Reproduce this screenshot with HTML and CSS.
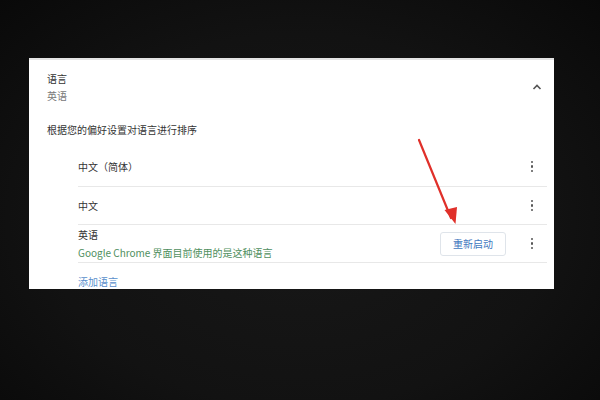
FILE: index.html
```html
<!DOCTYPE html>
<html lang="zh-CN">
<head>
<meta charset="utf-8">
<link rel="stylesheet" href="styles.css">
</head>
<body>
<div class="stage">
  <section class="panel">
    <div class="header">
      <div class="header-text">
        <div class="title">语言</div>
        <div class="subtitle">英语</div>
      </div>
      <svg class="chevron" width="10" height="8" viewBox="0 0 10 8"><path d="M1.5 6 L5 2.5 L8.5 6" fill="none" stroke="#555" stroke-width="1.6"/></svg>
    </div>
    <div class="desc">根据您的偏好设置对语言进行排序</div>
    <div class="list">
      <div class="row row-first">
        <div class="row-text"><div class="lang">中文（简体）</div></div>
        <div class="kebab"><span></span><span></span><span></span></div>
      </div>
      <div class="row">
        <div class="row-text"><div class="lang">中文</div></div>
        <div class="kebab"><span></span><span></span><span></span></div>
      </div>
      <div class="row">
        <div class="row-text">
          <div class="lang">英语</div>
          <div class="note">Google Chrome 界面目前使用的是这种语言</div>
        </div>
        <button class="restart">重新启动</button>
        <div class="kebab"><span></span><span></span><span></span></div>
      </div>
      <div class="add">添加语言</div>
    </div>
    <svg class="arrow" width="60" height="100" viewBox="0 0 60 100">
      <path d="M10 2 L42 80" stroke="#e0302a" stroke-width="2.2" stroke-linecap="round" fill="none"/>
      <path d="M35.5 72 L48 69 L46.5 86 Z" fill="#e0302a"/>
    </svg>
  </section>
</div>
</body>
</html>
```

FILE: styles.css
```css
html, body {
  margin: 0;
  padding: 0;
}
body {
  width: 600px;
  height: 400px;
  overflow: hidden;
  background: radial-gradient(ellipse at 50% 55%, #181818 0%, #121212 60%, #090909 100%);
  font-family: "Noto Sans CJK SC", "Noto Sans", sans-serif;
}
.stage {
  padding: 58px 0 0 29px;
}
.panel {
  position: relative;
  width: 525px;
  height: 229px;
  background: #fff;
  border-top: 2px solid #e4e4e4;
  overflow: hidden;
}
.header {
  display: flex;
  align-items: center;
  padding: 10px 12px 0 18px;
}
.header-text {
  flex: 1;
}
.title {
  font-size: 10px;
  line-height: 17px;
  color: #333;
}
.subtitle {
  font-size: 10px;
  line-height: 17px;
  color: #7a7a7a;
}
.chevron {
  display: block;
}
.desc {
  margin-top: 17px;
  padding-left: 18px;
  font-size: 10px;
  line-height: 17px;
  color: #333;
}
.list {
  margin: 9px 7px 0 49px;
}
.row {
  display: flex;
  align-items: center;
  height: 37px;
  border-bottom: 1px solid #e8e8e8;
}
.row-first {
  height: 39px;
}
.row-text {
  flex: 1;
}
.lang {
  font-size: 10px;
  line-height: 18px;
  color: #333;
}
.note {
  font-size: 10px;
  line-height: 18px;
  color: #4f8f60;
}
.restart {
  width: 66px;
  height: 24px;
  margin-right: 11px;
  padding: 0;
  background: #fff;
  border: 1px solid #dfe4ea;
  border-radius: 3px;
  font-family: "Noto Sans CJK SC", sans-serif;
  font-size: 10px;
  color: #3f78c0;
}
.kebab {
  width: 30px;
  display: flex;
  flex-direction: column;
  align-items: center;
  gap: 2px;
}
.kebab span {
  width: 2.5px;
  height: 2.5px;
  border-radius: 50%;
  background: #555;
}
.add {
  padding-top: 10px;
  font-size: 10px;
  line-height: 17px;
  color: #5a8fcc;
}
.arrow {
  position: absolute;
  left: 380px;
  top: 78px;
}
```
